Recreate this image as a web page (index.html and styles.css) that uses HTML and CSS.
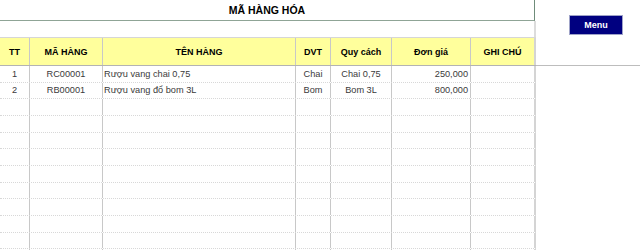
FILE: index.html
```html
<!DOCTYPE html>
<html lang="vi">
<head>
<meta charset="utf-8">
<title>Mã hàng hóa</title>
<link rel="stylesheet" href="styles.css">
</head>
<body>
<div class="page">
  <div class="sheet">
    <div class="title">MÃ HÀNG HÓA</div>
    <div class="spacer"></div>
    <div class="grid">
      <div class="row head">
        <div class="c">TT</div>
        <div class="c">MÃ HÀNG</div>
        <div class="c">TÊN HÀNG</div>
        <div class="c">DVT</div>
        <div class="c">Quy cách</div>
        <div class="c">Đơn giá</div>
        <div class="c last">GHI CHÚ</div>
      </div>
      <div class="row">
        <div class="c">1</div>
        <div class="c">RC00001</div>
        <div class="c l">Rượu vang chai 0,75</div>
        <div class="c">Chai</div>
        <div class="c">Chai 0,75</div>
        <div class="c r">250,000</div>
        <div class="c last"></div>
      </div>
      <div class="row">
        <div class="c">2</div>
        <div class="c">RB00001</div>
        <div class="c l">Rượu vang đổ bom 3L</div>
        <div class="c">Bom</div>
        <div class="c">Bom 3L</div>
        <div class="c r">800,000</div>
        <div class="c last"></div>
      </div>
      <div class="row"><div class="c"></div><div class="c"></div><div class="c"></div><div class="c"></div><div class="c"></div><div class="c"></div><div class="c last"></div></div>
      <div class="row"><div class="c"></div><div class="c"></div><div class="c"></div><div class="c"></div><div class="c"></div><div class="c"></div><div class="c last"></div></div>
      <div class="row"><div class="c"></div><div class="c"></div><div class="c"></div><div class="c"></div><div class="c"></div><div class="c"></div><div class="c last"></div></div>
      <div class="row"><div class="c"></div><div class="c"></div><div class="c"></div><div class="c"></div><div class="c"></div><div class="c"></div><div class="c last"></div></div>
      <div class="row"><div class="c"></div><div class="c"></div><div class="c"></div><div class="c"></div><div class="c"></div><div class="c"></div><div class="c last"></div></div>
      <div class="row"><div class="c"></div><div class="c"></div><div class="c"></div><div class="c"></div><div class="c"></div><div class="c"></div><div class="c last"></div></div>
      <div class="row"><div class="c"></div><div class="c"></div><div class="c"></div><div class="c"></div><div class="c"></div><div class="c"></div><div class="c last"></div></div>
      <div class="row"><div class="c"></div><div class="c"></div><div class="c"></div><div class="c"></div><div class="c"></div><div class="c"></div><div class="c last"></div></div>
      <div class="row"><div class="c"></div><div class="c"></div><div class="c"></div><div class="c"></div><div class="c"></div><div class="c"></div><div class="c last"></div></div>
      <div class="row"><div class="c"></div><div class="c"></div><div class="c"></div><div class="c"></div><div class="c"></div><div class="c"></div><div class="c last"></div></div>
    </div>
  </div>
  <div class="side">
    <div class="side-top">
      <button class="menu" type="button">Menu</button>
    </div>
  </div>
</div>
</body>
</html>
```

FILE: styles.css
```css
* { box-sizing: border-box; }
html, body {
  margin: 0;
  padding: 0;
  background: #fff;
}
body {
  font-family: "Liberation Sans", Arial, sans-serif;
  width: 640px;
  height: 250px;
  overflow: hidden;
}
.page {
  display: flex;
  align-items: flex-start;
  width: 640px;
  height: 250px;
  overflow: hidden;
}
.sheet {
  width: 536px;
  flex: none;
  display: flex;
  flex-direction: column;
}
.sheet > * { flex: none; }
.title {
  width: 535px;
  height: 21px;
  line-height: 20px;
  text-align: center;
  font-weight: bold;
  font-size: 10.5px;
  color: #000;
  border-bottom: 1px solid #8fa496;
  border-right: 1px solid #6f8c7a;
}
.spacer {
  height: 16px;
  border-right: 2px solid #dcdcdc;
}
.grid {
  display: flex;
  flex-direction: column;
}
.grid > .row { flex: none; }
.row {
  display: grid;
  grid-template-columns: 30px 73px 193px 35px 61px 79px 65px;
  height: 16.67px;
  border-bottom: 1px dotted #d8d8d8;
  font-size: 9.2px;
  color: #3a3a3a;
}
.row.head {
  height: 29px;
  background: #ffff9c;
  border-top: 1px solid #d6d6d6;
  border-bottom: 1px solid #b3b3b3;
  font-weight: bold;
  font-size: 9px;
  color: #000;
}
.c {
  border-right: 1px solid #c8c8c8;
  display: flex;
  align-items: center;
  justify-content: center;
  white-space: nowrap;
  overflow: hidden;
  padding: 0 2px;
}
.c.l { justify-content: flex-start; padding-left: 1px; }
.c.r { justify-content: flex-end; padding-right: 2px; }
.c.last { border-right: 2px solid #d4d4d4; }
.side {
  flex: 1;
}
.side-top {
  height: 66px;
  border-bottom: 1px solid #bdbdbd;
  padding: 15px 0 0 33px;
}
.menu {
  display: block;
  width: 54px;
  height: 20px;
  margin: 0;
  padding: 0;
  background: #000080;
  border: 1px solid #9fa3c8;
  color: #fff;
  font-family: "Liberation Sans", Arial, sans-serif;
  font-weight: bold;
  font-size: 9px;
  text-align: center;
}
```
